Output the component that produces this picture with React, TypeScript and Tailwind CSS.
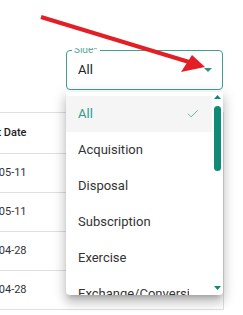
import { Check } from "lucide-react";

const options = [
  "All",
  "Acquisition",
  "Disposal",
  "Subscription",
  "Exercise",
  "Exchange/Conversion",
];

const rows = ["2024-05-11", "2024-05-11", "2024-04-28", "2024-04-28"];

export default function App() {
  return (
    <div className="relative w-[243px] h-[315px] overflow-hidden bg-white font-['Roboto',sans-serif]">
      <div className="mt-[48px] overflow-hidden pt-[2px] pl-[66px]">
        <div className="relative w-[157px] h-[40px] rounded border border-[#3f9f91] flex items-center justify-between pl-[11px] pr-[10px]">
          <span className="absolute -top-[6px] left-[5px] px-[2px] bg-white text-[10px] leading-none text-[#5aa89d]">
            Side*
          </span>
          <span className="text-[13px] text-[#222]">All</span>
          <svg width="8" height="4" viewBox="0 0 8 4">
            <path d="M0 0 L8 0 L4 4 Z" fill="#2e9184" />
          </svg>
        </div>
      </div>

      {/* Table behind the menu */}
      <div className="mt-[22px] w-[224px] border-t border-r border-[#e0e0e0] overflow-hidden">
        <div className="h-[41px] border-b border-[#e0e0e0] flex items-center -ml-[32px] text-[11px] font-medium text-[#212121]">
          Report Date
        </div>
        {rows.map((d, i) => (
          <div
            key={i}
            className="h-[39px] border-b border-[#e0e0e0] flex items-center -ml-[29px] text-[11px] text-[#333]"
          >
            {d}
          </div>
        ))}
      </div>

      {/* Dropdown menu */}
      <div className="absolute left-[66px] top-[92px] w-[157px] h-[203px] bg-white rounded-b flex overflow-hidden shadow-[0_5px_5px_-3px_rgba(0,0,0,0.2),0_8px_10px_1px_rgba(0,0,0,0.14),0_3px_14px_2px_rgba(0,0,0,0.12)]">
        <div className="flex-1 min-w-0 pt-1">
          {options.map((o, i) => (
            <div
              key={o}
              className={`h-9 flex items-center justify-between pl-3 pr-[12px] text-[13px] whitespace-nowrap ${
                i === 0 ? "bg-[#f5f5f5] text-[#2f9c8d]" : "text-[#333]"
              }`}
            >
              <span className="block min-w-0 w-[111px] overflow-hidden">{o}</span>
              {i === 0 && (
                <Check className="w-[14px] h-[14px] text-[#4fada0]" strokeWidth={1.5} />
              )}
            </div>
          ))}
        </div>
        {/* Scrollbar */}
        <div className="w-[11px] flex flex-col items-center pt-[3px] pb-[5px]">
          <svg width="7" height="4" viewBox="0 0 7 4">
            <path d="M0 4 L7 4 L3.5 0 Z" fill="#0f8a77" />
          </svg>
          <div className="mt-[7px] w-[7px] h-[65px] rounded-full bg-[#0f8a77]" />
          <div className="flex-1" />
          <svg width="7" height="4" viewBox="0 0 7 4">
            <path d="M0 0 L7 0 L3.5 4 Z" fill="#0f8a77" />
          </svg>
        </div>
      </div>

      {/* Red annotation arrow */}
      <svg
        className="absolute inset-0 pointer-events-none"
        width="243"
        height="315"
        viewBox="0 0 243 315"
      >
        <line x1="41" y1="17" x2="189" y2="62" stroke="#e31e24" strokeWidth="4" />
        <polygon points="192,55 181,72 205,67" fill="#e31e24" />
      </svg>
    </div>
  );
}
